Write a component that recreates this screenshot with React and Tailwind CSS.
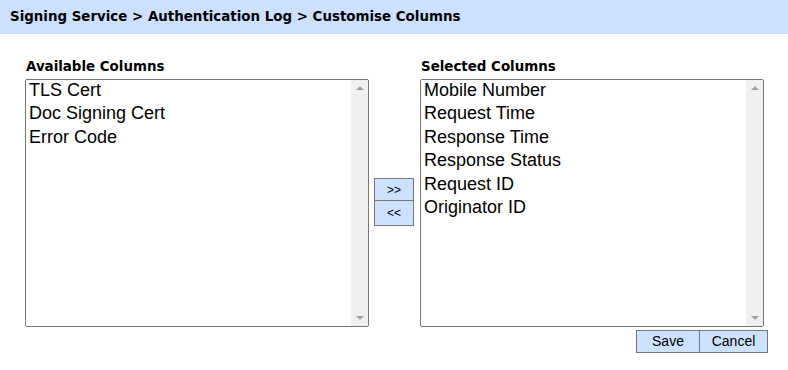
import React, { useState } from "react"

const available = ["TLS Cert", "Doc Signing Cert", "Error Code"]
const selected = [
  "Mobile Number",
  "Request Time",
  "Response Time",
  "Response Status",
  "Request ID",
  "Originator ID",
]

const ListBox = ({ items }) => {
  return (
    <div className="flex w-[344px] h-[248px] border border-[#767676] rounded-[2px] bg-white overflow-hidden">
      <div className="flex-1 pl-[3px] mt-[-1px]">
        {items.map((item) => (
          <div
            key={item}
            className="text-[18px] leading-[23.4px] text-black whitespace-nowrap"
            style={{ fontFamily: '"Liberation Sans", Arial, sans-serif' }}
          >
            {item}
          </div>
        ))}
      </div>
      <div className="w-[17px] bg-[#f0f0f0] flex flex-col justify-between items-center py-[6px]">
        <div className="w-0 h-0 border-l-[4px] border-r-[4px] border-b-[4px] border-l-transparent border-r-transparent border-b-[#a3a3a3]" />
        <div className="w-0 h-0 border-l-[4px] border-r-[4px] border-t-[4px] border-l-transparent border-r-transparent border-t-[#a3a3a3]" />
      </div>
    </div>
  )
}

export default function App() {
  const [left] = useState(available)
  const [right] = useState(selected)

  const btnFont = { fontFamily: '"Liberation Sans", Arial, sans-serif' }
  const labelFont = { fontFamily: '"DejaVu Sans", Verdana, sans-serif' }

  return (
    <div className="w-[788px] h-[370px] bg-white">
      <div
        className="h-[34px] bg-[#cce0ff] flex items-center pl-[10px] text-[13.4px] font-bold text-black"
        style={labelFont}
      >
        Signing Service &gt; Authentication Log &gt; Customise Columns
      </div>
      <div className="pl-[25px] pt-[23px]">
        <div className="flex">
          <div>
            <div className="text-[13.4px] font-bold text-black h-[22px] pl-[1px]" style={labelFont}>
              Available Columns
            </div>
            <ListBox items={left} />
          </div>
          <div className="flex flex-col pt-[121px] pl-[5px] pr-[6px]">
            <button
              className="w-[40px] h-[23px] bg-[#cce0ff] border border-[#767676] text-[12px] text-black leading-none"
              style={btnFont}
            >
              &gt;&gt;
            </button>
            <button
              className="w-[40px] h-[25px] bg-[#cce0ff] border border-[#767676] border-t-0 text-[12px] text-black leading-none"
              style={btnFont}
            >
              &lt;&lt;
            </button>
          </div>
          <div>
            <div className="text-[13.4px] font-bold text-black h-[22px] pl-[1px]" style={labelFont}>
              Selected Columns
            </div>
            <ListBox items={right} />
            <div className="flex justify-end mt-[3px] mr-[-4px]">
              <button
                className="w-[64px] h-[23px] bg-[#cce0ff] border border-[#767676] text-[14px] text-black"
                style={btnFont}
              >
                Save
              </button>
              <button
                className="w-[68px] h-[23px] bg-[#cce0ff] border border-[#767676] border-l-0 text-[14px] text-black"
                style={btnFont}
              >
                Cancel
              </button>
            </div>
          </div>
        </div>
      </div>
    </div>
  )
}
